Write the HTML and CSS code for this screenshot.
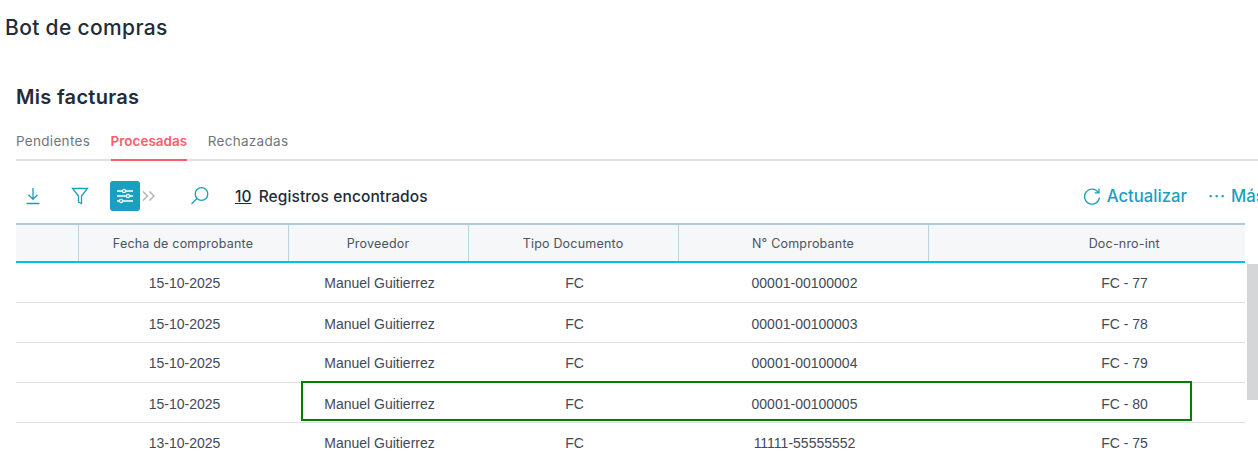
FILE: index.html
```html
<!DOCTYPE html>
<html lang="en">
<head>
  <meta charset="UTF-8">
  <title>Bot de compras</title>
  <link rel="stylesheet" href="styles.css">
</head>
<body>

  <h1 class="page-title">Bot de compras</h1>

  <main class="panel">
    <h2 class="panel-title">Mis facturas</h2>

    <div class="tabs">
      <a class="tab">Pendientes</a>
      <a class="tab active">Procesadas</a>
      <a class="tab">Rechazadas</a>
    </div>

    <div class="toolbar">
      <button class="tool tool-download" type="button">
        <svg width="16" height="18" viewBox="0 0 16 18" fill="none" stroke="#1a9fc0" stroke-width="1.3"><path d="M8 1v11M3.5 7.8 8 12.3l4.5-4.5M1.5 16.5h13"/></svg>
      </button>
      <button class="tool tool-filter" type="button">
        <svg width="18" height="18" viewBox="0 0 18 18" fill="none" stroke="#1a9fc0" stroke-width="1.3"><path d="M1.5 1.5h15L10.5 9v7.5l-3-1.5V9z"/></svg>
      </button>
      <button class="tool tool-columns" type="button">
        <svg width="18" height="16" viewBox="0 0 18 16" fill="none" stroke="#fff" stroke-width="1.3"><path d="M1 3h16M1 8h16M1 13h16"/><circle cx="8" cy="3" r="1.6" fill="#1a9fc0"/><circle cx="12" cy="8" r="1.6" fill="#1a9fc0"/><circle cx="5" cy="13" r="1.6" fill="#1a9fc0"/></svg>
      </button>
      <svg class="chevrons" width="14" height="12" viewBox="0 0 14 12" fill="none" stroke="#b4b6ba" stroke-width="1.5"><path d="M1 1.5 5.5 6 1 10.5M7.5 1.5 12 6l-4.5 4.5"/></svg>
      <button class="tool tool-search" type="button">
        <svg width="20" height="20" viewBox="0 0 20 20" fill="none" stroke="#1a9fc0" stroke-width="1.3"><circle cx="11.5" cy="8" r="6.3"/><path d="M7 12.5 1.5 18"/></svg>
      </button>
      <span class="count"><u>10</u>Registros encontrados</span>

      <div class="actions">
        <a class="action">
          <svg width="18" height="19" viewBox="0 0 18 19" fill="none" stroke="#1a9fc0" stroke-width="1.3"><path d="M15.3 5.5A7.5 7.5 0 1 0 16.5 10.5M16 1.5v4.3h-4.3"/></svg>
          Actualizar
        </a>
        <a class="action action-more"><span class="dots">···</span>Más</a>
      </div>
    </div>

    <div class="table-wrap">
      <div class="grid-clip">
        <table class="grid">
          <colgroup>
            <col class="col-check">
            <col class="col-date">
            <col class="col-vendor">
            <col class="col-type">
            <col class="col-number">
            <col class="col-internal">
          </colgroup>
          <thead>
            <tr>
              <th></th>
              <th>Fecha de comprobante</th>
              <th>Proveedor</th>
              <th>Tipo Documento</th>
              <th>N° Comprobante</th>
              <th>Doc-nro-int</th>
            </tr>
          </thead>
          <tbody>
            <tr><td></td><td>15-10-2025</td><td>Manuel Guitierrez</td><td>FC</td><td>00001-00100002</td><td>FC - 77</td></tr>
            <tr><td></td><td>15-10-2025</td><td>Manuel Guitierrez</td><td>FC</td><td>00001-00100003</td><td>FC - 78</td></tr>
            <tr><td></td><td>15-10-2025</td><td>Manuel Guitierrez</td><td>FC</td><td>00001-00100004</td><td>FC - 79</td></tr>
            <tr><td></td><td>15-10-2025</td><td>Manuel Guitierrez</td><td>FC</td><td>00001-00100005</td><td>FC - 80</td></tr>
            <tr><td></td><td>13-10-2025</td><td>Manuel Guitierrez</td><td>FC</td><td>11111-55555552</td><td>FC - 75</td></tr>
          </tbody>
        </table>
      </div>
      <div class="highlight"></div>
      <div class="scroll-thumb"></div>
    </div>
  </main>

</body>
</html>
```

FILE: styles.css
```css
:root {
  --teal: #1a9fc0;
  --ink: #222b3a;
  --muted: #6f7680;
  --coral: #ff5c6c;
  --ui-font: Inter, "Open Sans", Arial, sans-serif;
}

html, body {
  margin: 0;
  height: 460px;
  overflow: hidden;
  background: #fff;
}

body {
  font-family: var(--ui-font);
  color: var(--ink);
}

.page-title {
  margin: 0;
  padding: 15px 0 0 5px;
  height: 60px;
  box-sizing: border-box;
  font-size: 21px;
  line-height: 25px;
  font-weight: 500;
  letter-spacing: .35px;
}

.panel {
  padding: 24px 0 0 16px;
}

.panel-title {
  margin: 0;
  font-size: 20px;
  line-height: 26px;
  font-weight: 600;
  letter-spacing: .3px;
}

.tabs {
  display: flex;
  gap: 20.5px;
  margin-top: 18px;
  height: 31px;
  border-bottom: 2px solid #dfe1e6;
  font-size: 13.5px;
  letter-spacing: .3px;
}

.tab {
  color: var(--muted);
  height: 31px;
  line-height: 26px;
}

.tab.active {
  color: var(--coral);
  font-weight: 600;
  letter-spacing: 0;
  border-bottom: 2px solid var(--coral);
}

.toolbar {
  display: flex;
  align-items: center;
  height: 30px;
  margin-top: 20px;
  width: 1300px;
}

.tool {
  display: flex;
  align-items: center;
  justify-content: center;
  padding: 0;
  border: none;
  background: none;
}

.tool-download { width: 16px; margin-left: 9px; }
.tool-filter { width: 18px; margin-left: 30px; }

.tool-columns {
  width: 30px;
  height: 30px;
  margin-left: 21px;
  background: var(--teal);
  border-radius: 3px;
}

.chevrons { margin-left: 2px; }
.tool-search { width: 20px; margin-left: 34px; }

.count {
  margin-left: 25px;
  font-size: 15.5px;
  font-weight: 500;
  letter-spacing: .1px;
}

.count u { margin-right: 7px; }

.actions {
  display: flex;
  align-items: center;
  gap: 21px;
  margin-left: 655px;
  color: var(--teal);
  font-size: 16.7px;
  font-weight: 500;
}

.action {
  display: flex;
  align-items: center;
  gap: 6px;
}

.action-more { gap: 5px; }

.dots { letter-spacing: 1px; }

.table-wrap {
  position: relative;
  margin-top: 12px;
}

.grid-clip {
  width: 1229px;
  overflow: hidden;
}

.grid {
  width: 1304px;
  border-collapse: collapse;
  table-layout: fixed;
}

.col-check { width: 62px; }
.col-date { width: 210px; }
.col-vendor { width: 180px; }
.col-type { width: 210px; }
.col-number { width: 250px; }
.col-internal { width: 392px; }

.grid th {
  height: 35px;
  padding: 1px 0 0;
  background: #f5f7f9;
  border-top: 2px solid #aecbdc;
  border-bottom: 2px solid #00c0ef;
  border-left: 1px solid #b9d2e2;
  color: #4b5260;
  font-size: 12.5px;
  font-weight: 400;
  letter-spacing: .2px;
}

.grid th:first-child { border-left: none; }

.grid td {
  box-sizing: border-box;
  height: 40px;
  padding: 2px 0 0 3px;
  border-bottom: 1px solid #dedfe0;
  color: #414a58;
  font-family: "Liberation Sans", Arial, sans-serif;
  font-size: 14px;
  text-align: center;
}

.grid td:last-child { padding-left: 1px; }

.grid tbody tr:nth-child(even) td { padding-top: 4px; }

.highlight {
  position: absolute;
  left: 285px;
  top: 158px;
  width: 887px;
  height: 36px;
  border: 2px solid #008000;
}

.scroll-thumb {
  position: absolute;
  left: 1231px;
  top: 41px;
  width: 11px;
  height: 136px;
  background: #d5d6d8;
}
```
